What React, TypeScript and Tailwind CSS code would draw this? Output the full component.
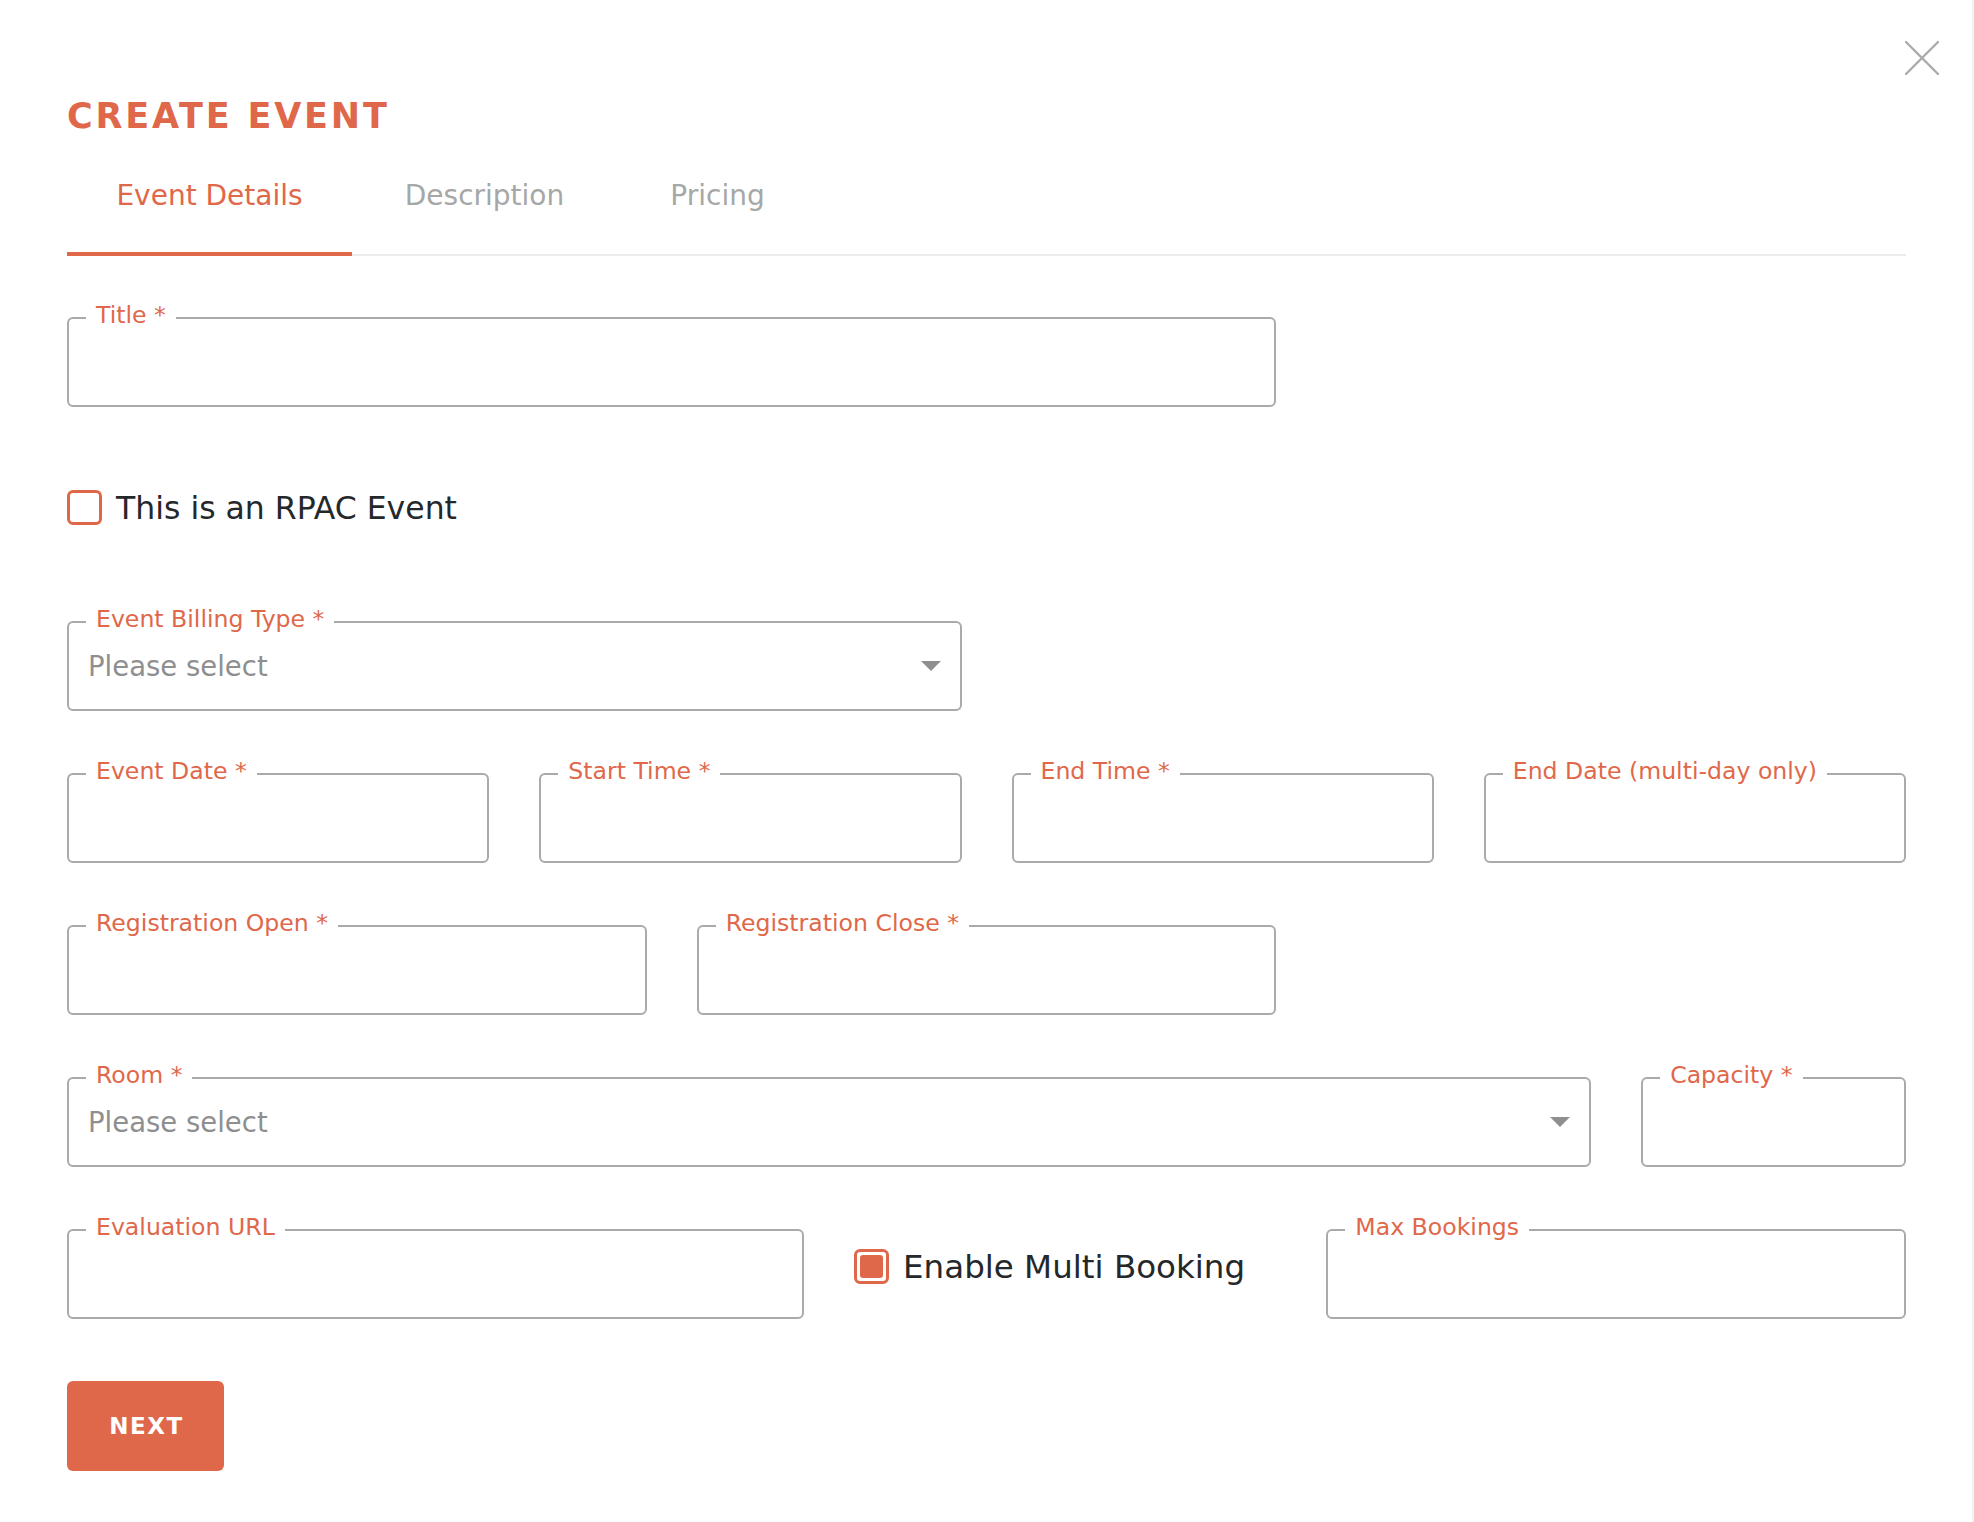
import React from "react";

const FONT = { fontFamily: '"DejaVu Sans", "Open Sans", sans-serif' };

function Label({ text }: { text: string }) {
  return (
    <span className="absolute left-[17px] top-[-3px] -translate-y-1/2 whitespace-nowrap bg-white px-[10px] text-[23.6px] leading-none text-[#e0684a]">
      {text}
    </span>
  );
}

function Field({ label, span, select }: { label: string; span: string; select?: boolean }) {
  return (
    <div className={`${span} relative h-[90px] rounded-[6px] border-2 border-[#a8aba8]`}>
      <Label text={label} />
      {select && (
        <div className="flex h-full items-center justify-between pl-[19px] pr-[19px]">
          <span className="pt-[2px] text-[27.5px] leading-none text-[#8f8f8f]">Please select</span>
          <svg width="20" height="10" viewBox="0 0 20 10">
            <path d="M0 0 L20 0 L10 10 Z" fill="#8f8f8f" />
          </svg>
        </div>
      )}
    </div>
  );
}

function Checkbox({ checked }: { checked?: boolean }) {
  return (
    <div className="h-[35px] w-[35px] shrink-0 rounded-[6px] border-[3px] border-[#e0684a] p-[3px]">
      {checked && <div className="h-full w-full rounded-[3px] bg-[#e0684a]" />}
    </div>
  );
}

export default function App() {
  return (
    <div className="relative min-h-[1522px] w-full bg-white" style={FONT}>
      <div className="absolute right-0 top-0 h-full w-[2px] bg-[#f3f3f3]" />
      <button className="absolute left-[1905px] top-[41px]">
        <svg width="34" height="34" viewBox="0 0 34 34">
          <line x1="1" y1="1" x2="33" y2="33" stroke="#a9aca9" strokeWidth="2.4" strokeLinecap="round" />
          <line x1="33" y1="1" x2="1" y2="33" stroke="#a9aca9" strokeWidth="2.4" strokeLinecap="round" />
        </svg>
      </button>

      <div className="pl-[67px] pr-[68px] pt-[99px]">
        <h1 className="text-[35px] font-bold leading-none tracking-[2.8px] text-[#e0684a]">CREATE EVENT</h1>

        <div className="flex border-b-2 border-[#ececec]">
          <div className="relative flex h-[120px] w-[285px] items-center justify-center pt-[3px] text-[28px] leading-none text-[#e0684a]">
            Event Details
            <div className="absolute bottom-[-2px] left-0 h-[4px] w-full bg-[#e0684a]" />
          </div>
          <div className="flex h-[120px] w-[265px] items-center justify-center pt-[3px] text-[28px] leading-none text-[#a5a8a6]">
            Description
          </div>
          <div className="flex h-[120px] w-[201px] items-center justify-center pt-[3px] text-[28px] leading-none text-[#a5a8a6]">
            Pricing
          </div>
        </div>

        <div className="mt-[61px] flex flex-col gap-[62px]">
          <div className="grid grid-cols-12 gap-x-[50px]">
            <Field label="Title *" span="col-span-8" />
          </div>

          <div className="flex h-[90px] items-start pt-[21px]">
            <div className="flex items-center gap-[14px]">
              <Checkbox />
              <span className="pt-[2px] text-[31.5px] leading-none text-[#25282b]">This is an RPAC Event</span>
            </div>
          </div>

          <div className="grid grid-cols-12 gap-x-[50px]">
            <Field label="Event Billing Type *" span="col-span-6" select />
          </div>

          <div className="grid grid-cols-12 gap-x-[50px]">
            <Field label="Event Date *" span="col-span-3" />
            <Field label="Start Time *" span="col-span-3" />
            <Field label="End Time *" span="col-span-3" />
            <Field label="End Date (multi-day only)" span="col-span-3" />
          </div>

          <div className="grid grid-cols-12 gap-x-[50px]">
            <Field label="Registration Open *" span="col-span-4" />
            <Field label="Registration Close *" span="col-span-4" />
          </div>

          <div className="grid grid-cols-12 gap-x-[50px]">
            <Field label="Room *" span="col-span-10" select />
            <Field label="Capacity *" span="col-span-2" />
          </div>

          <div className="grid grid-cols-12 gap-x-[50px]">
            <Field label="Evaluation URL" span="col-span-5" />
            <div className="col-span-3 flex h-[90px] items-start pt-[20px]">
              <div className="flex items-center gap-[14px]">
                <Checkbox checked />
                <span className="whitespace-nowrap pt-[2px] text-[32.5px] leading-none text-[#25282b]">Enable Multi Booking</span>
              </div>
            </div>
            <Field label="Max Bookings" span="col-span-4" />
          </div>

          <div>
            <button className="flex h-[90px] w-[157px] items-center justify-center rounded-[6px] bg-[#e0684a] pl-[2px] text-[23px] font-bold leading-none tracking-[1.5px] text-white">
              NEXT
            </button>
          </div>
        </div>
      </div>
    </div>
  );
}
